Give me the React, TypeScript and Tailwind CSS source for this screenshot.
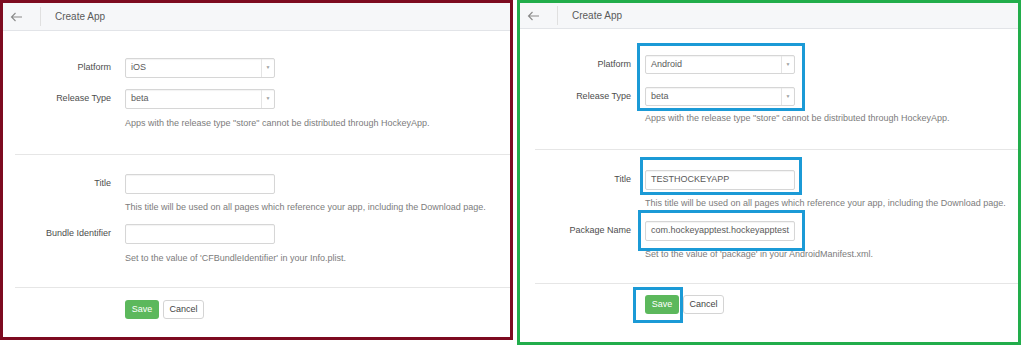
import React from "react";

type FieldProps = {
  label: string;
  value?: string;
  select?: boolean;
  h: string;
};

function Field({ label, value, select, h }: FieldProps) {
  return (
    <div className="flex items-center">
      <div className="w-[108px] text-right text-[9px] text-[#4d4d4d]">{label}</div>
      <div
        className={`ml-[14px] flex w-[150px] ${h} items-stretch rounded-[2px] border border-[#d6d6d6] bg-white shadow-[inset_0_1px_1px_rgba(0,0,0,0.05)]`}
      >
        <div className="flex flex-1 items-center pl-[5px] text-[9px] text-[#5a5a5a]">{value}</div>
        {select && (
          <div className="flex w-[13px] items-center justify-center border-l border-[#e4e4e4] text-[5px] text-[#a0a0a0]">
            ▼
          </div>
        )}
      </div>
    </div>
  );
}

function Help({ children, className }: { children: React.ReactNode; className?: string }) {
  return (
    <div className={`ml-[122px] text-[9px] leading-[12px] whitespace-nowrap text-[#7c7c7c] ${className ?? ""}`}>
      {children}
    </div>
  );
}

function Header({ h }: { h: string }) {
  return (
    <div className={`flex ${h} items-center border-b border-[#e2e4e8] bg-[#f6f7f9]`}>
      <svg width="13" height="10" viewBox="0 0 13 10" className="ml-[7px]">
        <path d="M12 5H1.5M5.5 1L1.5 5l4 4" fill="none" stroke="#8a8a8a" strokeWidth="1.1" />
      </svg>
      <div className="ml-[17px] h-[19px] w-px bg-[#e0e0e0]" />
      <div className="ml-[14px] text-[10px] text-[#5a5a5a]">Create App</div>
    </div>
  );
}

function Buttons() {
  return (
    <div className="ml-[122px] flex gap-[4px]">
      <div className="flex h-[19px] w-[34px] items-center justify-center rounded-[3px] bg-[#5cb85c] text-[9px] text-white">
        Save
      </div>
      <div className="flex h-[19px] w-[41px] items-center justify-center rounded-[3px] border border-[#d4d4d4] bg-white text-[9px] text-[#444]">
        Cancel
      </div>
    </div>
  );
}

function LeftPanel() {
  return (
    <div className="h-[340px] w-[513px] shrink-0 border-[3px] border-[#7d0b20] bg-white font-['Liberation_Sans',Arial,sans-serif]">
      <Header h="h-[28px]" />
      <div className="pt-[27px]">
        <Field label="Platform" value="iOS" select h="h-[20px]" />
        <div className="mt-[11px]">
          <Field label="Release Type" value="beta" select h="h-[20px]" />
        </div>
        <Help className="mt-[8px]">
          Apps with the release type "store" cannot be distributed through HockeyApp.
        </Help>
      </div>
      <div className="mt-[25px] ml-[12px] border-t border-[#e6e6e6]" />
      <div className="pt-[19px]">
        <Field label="Title" h="h-[20px]" />
        <Help className="mt-[7px]">
          This title will be used on all pages which reference your app, including the Download page.
        </Help>
        <div className="mt-[11px]">
          <Field label="Bundle Identifier" h="h-[20px]" />
        </div>
        <Help className="mt-[8px]">Set to the value of 'CFBundleIdentifier' in your Info.plist.</Help>
      </div>
      <div className="mt-[23px] ml-[12px] border-t border-[#e6e6e6]" />
      <div className="pt-[12px]">
        <Buttons />
      </div>
    </div>
  );
}

function RightPanel() {
  return (
    <div className="relative ml-[4px] h-[345px] w-[504px] shrink-0 border-[3px] border-[#22ad4b] bg-white font-['Liberation_Sans',Arial,sans-serif]">
      <Header h="h-[26px]" />
      <div className="pl-[3px] pt-[26px]">
        <Field label="Platform" value="Android" select h="h-[19px]" />
        <div className="mt-[13px]">
          <Field label="Release Type" value="beta" select h="h-[19px]" />
        </div>
        <Help className="mt-[6px]">
          Apps with the release type "store" cannot be distributed through HockeyApp.
        </Help>
      </div>
      <div className="mt-[25px] ml-[15px] border-t border-[#e6e6e6]" />
      <div className="pl-[3px] pt-[20px]">
        <Field label="Title" value="TESTHOCKEYAPP" h="h-[20px]" />
        <Help className="mt-[7px]">
          This title will be used on all pages which reference your app, including the Download page.
        </Help>
        <div className="mt-[12px]">
          <Field label="Package Name" value="com.hockeyapptest.hockeyapptest" h="h-[20px]" />
        </div>
        <Help className="mt-[7px]">Set to the value of 'package' in your AndroidManifest.xml.</Help>
      </div>
      <div className="mt-[23px] ml-[15px] border-t border-[#e6e6e6]" />
      <div className="pl-[3px] pt-[11px]">
        <Buttons />
      </div>

      <div className="absolute left-[117px] top-[40px] h-[68px] w-[168px] border-[3px] border-[#1b9ad6]" />
      <div className="absolute left-[120px] top-[154px] h-[38px] w-[162px] border-[3px] border-[#1b9ad6]" />
      <div className="absolute left-[118px] top-[207px] h-[41px] w-[167px] border-[3px] border-[#1b9ad6]" />
      <div className="absolute left-[113px] top-[284px] h-[36px] w-[50px] border-[3px] border-[#1b9ad6]" />
    </div>
  );
}

export default function App() {
  return (
    <div className="flex h-[347px] w-[1024px] items-start bg-white">
      <LeftPanel />
      <RightPanel />
    </div>
  );
}
